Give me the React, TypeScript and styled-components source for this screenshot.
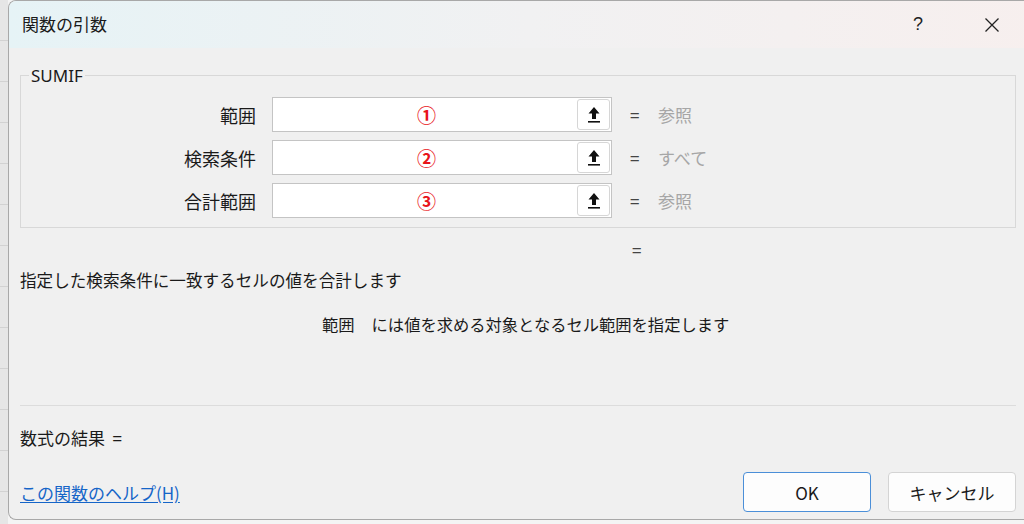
import React from "react";
import styled, { createGlobalStyle } from "styled-components";

const GlobalStyle = createGlobalStyle`
  html, body {
    margin: 0;
    padding: 0;
    overflow: hidden;
  }
  body {
    width: 1024px;
    height: 524px;
    background: #f4f4f4;
    font-family: "Noto Sans CJK JP", "Noto Sans", sans-serif;
  }
`;

interface ArgRow {
  label: string;
  mark: string;
  value: string;
}

const rows: ArgRow[] = [
  { label: "範囲", mark: "①", value: "参照" },
  { label: "検索条件", mark: "②", value: "すべて" },
  { label: "合計範囲", mark: "③", value: "参照" },
];

const UpIcon = () => (
  <svg width="14" height="18" viewBox="0 0 14 18">
    <path d="M7 1 L12.5 7.5 L9 7.5 L9 13 L5 13 L5 7.5 L1.5 7.5 Z" fill="#111" />
    <rect x="1" y="15" width="12" height="1.6" fill="#111" />
  </svg>
);

const App = (): JSX.Element => {
  return (
    <>
      <GlobalStyle />
      <Page>
        <Strip />
        <Dialog>
          <TitleBar>
            <Title>関数の引数</Title>
            <TitleButtons>
              <TitleButton>?</TitleButton>
              <TitleButton>
                <svg width="16" height="16" viewBox="0 0 16 16">
                  <path d="M1.5 1.5 L14.5 14.5 M14.5 1.5 L1.5 14.5" stroke="#222" strokeWidth="1.3" />
                </svg>
              </TitleButton>
            </TitleButtons>
          </TitleBar>
          <Body>
            <Group>
              <Legend>SUMIF</Legend>
              {rows.map((row, index) => (
                <Row key={index}>
                  <Label>{row.label}</Label>
                  <InputFrame>
                    <InputText>{row.mark}</InputText>
                    <RefButton>
                      <UpIcon />
                    </RefButton>
                  </InputFrame>
                  <Equal>=</Equal>
                  <Value>{row.value}</Value>
                </Row>
              ))}
            </Group>
            <ResultEqual>=</ResultEqual>
            <Description>指定した検索条件に一致するセルの値を合計します</Description>
            <Detail>
              <DetailName>範囲</DetailName>
              には値を求める対象となるセル範囲を指定します
            </Detail>
            <Separator />
            <Result>数式の結果&nbsp; =</Result>
            <Footer>
              <HelpLink href="#">この関数のヘルプ(H)</HelpLink>
              <Buttons>
                <DialogButton $primary>OK</DialogButton>
                <DialogButton>キャンセル</DialogButton>
              </Buttons>
            </Footer>
          </Body>
        </Dialog>
      </Page>
    </>
  );
};

const Page = styled.div`
  display: flex;
  width: 1024px;
  height: 524px;
  overflow: hidden;
`;

const Strip = styled.div`
  width: 8px;
  flex-shrink: 0;
  height: 524px;
  background: repeating-linear-gradient(
    to bottom,
    #e6e6e6 0px,
    #e6e6e6 40px,
    #d2d2d2 40px,
    #d2d2d2 41px
  );
`;

const Dialog = styled.div`
  width: 1040px;
  flex-shrink: 0;
  height: 520px;
  background: #f0f0f0;
  border: 1px solid #a8a8a8;
  border-right: none;
  border-radius: 8px 0 0 8px;
  display: flex;
  flex-direction: column;
  overflow: hidden;
  box-sizing: border-box;
`;

const TitleBar = styled.div`
  height: 47px;
  flex-shrink: 0;
  display: flex;
  align-items: center;
  justify-content: space-between;
  padding-left: 13px;
  background: linear-gradient(to right, #e6f3f6 0%, #f1f1f2 50%, #f7efee 100%);
`;

const Title = styled.div`
  font-size: 17px;
  color: #1a1a1a;
  padding-bottom: 2px;
`;

const TitleButtons = styled.div`
  display: flex;
  align-items: center;
  margin-right: 19px;
`;

const TitleButton = styled.div`
  width: 74px;
  height: 47px;
  display: flex;
  align-items: center;
  justify-content: center;
  font-family: "Liberation Sans", sans-serif;
  font-size: 18px;
  color: #222;
`;

const Body = styled.div`
  flex: 1;
  display: flex;
  flex-direction: column;
  padding: 0 32px 0 11px;
  color: #1a1a1a;
`;

const Group = styled.fieldset`
  margin: 16px 0 0 0;
  padding: 10px 0 9px 0;
  border: 1px solid #d8d8d8;
  display: flex;
  flex-direction: column;
  gap: 8px;
  min-width: 0;
`;

const Legend = styled.legend`
  font-family: "Noto Sans", sans-serif;
  font-size: 17px;
  padding: 0 2px;
  margin-left: 8px;
  color: #1a1a1a;
`;

const Row = styled.div`
  display: flex;
  align-items: center;
  height: 35px;
`;

const Label = styled.div`
  width: 235px;
  text-align: right;
  font-size: 18px;
  margin-right: 16px;
`;

const InputFrame = styled.div`
  width: 340px;
  height: 35px;
  box-sizing: border-box;
  background: #fff;
  border: 1px solid #c4c4c4;
  display: flex;
  align-items: stretch;
`;

const InputText = styled.div`
  flex: 1;
  display: flex;
  align-items: center;
  justify-content: center;
  padding-left: 4px;
  color: #e8141a;
  font-weight: 700;
  font-size: 19px;
`;

const RefButton = styled.div`
  width: 31px;
  margin: 1px;
  border: 1px solid #d6d6d6;
  border-radius: 3px;
  display: flex;
  align-items: center;
  justify-content: center;
  background: #fff;
`;

const Equal = styled.div`
  font-size: 17px;
  margin-left: 18px;
  width: 12px;
  color: #444;
`;

const Value = styled.div`
  font-size: 17px;
  margin-left: 16px;
  color: #a6a6a6;
`;

const ResultEqual = styled.div`
  font-size: 17px;
  color: #444;
  margin: 10px 0 0 612px;
  height: 24px;
  line-height: 24px;
`;

const Description = styled.div`
  font-size: 16.6px;
  margin-top: 6px;
  height: 24px;
  line-height: 24px;
`;

const Detail = styled.div`
  font-size: 16.3px;
  margin: 20px 0 0 302px;
  height: 24px;
  line-height: 24px;
`;

const DetailName = styled.span`
  margin-right: 17px;
`;

const Separator = styled.div`
  height: 1px;
  background: #dcdcdc;
  margin-top: 69px;
`;

const Result = styled.div`
  font-size: 17px;
  margin-top: 20px;
  height: 24px;
  line-height: 24px;
`;

const Footer = styled.div`
  display: flex;
  align-items: center;
  justify-content: space-between;
  margin-top: 22px;
`;

const HelpLink = styled.a`
  font-size: 17px;
  color: #1565c8;
  text-decoration: underline;
  text-underline-offset: 2px;
`;

const Buttons = styled.div`
  display: flex;
  gap: 17px;
`;

const DialogButton = styled.div<{ $primary?: boolean }>`
  width: 128px;
  height: 40px;
  box-sizing: border-box;
  border-radius: 4px;
  background: #fdfdfd;
  border: 1px solid ${(p) => (p.$primary ? "#4b8fd8" : "#d4d4d4")};
  display: flex;
  align-items: center;
  justify-content: center;
  font-size: 17px;
  color: #1a1a1a;
`;

export default App;
